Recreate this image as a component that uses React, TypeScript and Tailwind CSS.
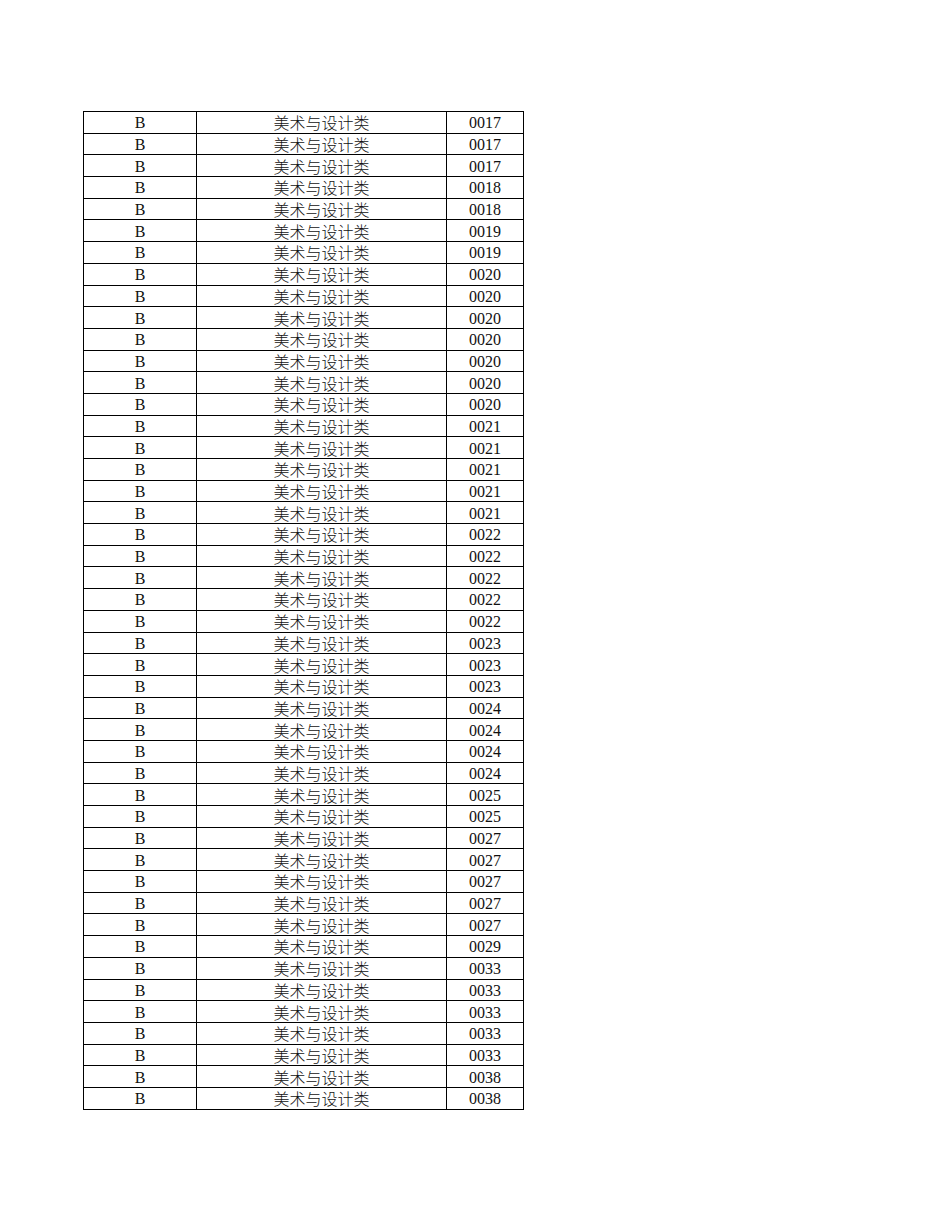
import React from 'react';

const codes: string[] = [
  '0017', '0017', '0017', '0018', '0018', '0019', '0019',
  '0020', '0020', '0020', '0020', '0020', '0020', '0020',
  '0021', '0021', '0021', '0021', '0021',
  '0022', '0022', '0022', '0022', '0022',
  '0023', '0023', '0023',
  '0024', '0024', '0024', '0024',
  '0025', '0025',
  '0027', '0027', '0027', '0027', '0027',
  '0029',
  '0033', '0033', '0033', '0033', '0033',
  '0038', '0038',
];

const latin = { fontFamily: '"Liberation Serif", "Noto Sans CJK SC", serif' };

export default function App() {
  return (
    <div className="min-h-[1230px] w-[950px] bg-white pl-[83px] pt-[111px]">
      <table className="w-[440px] table-fixed border-collapse text-[16px] leading-none text-[#111]">
        <colgroup>
          <col className="w-[113px]" />
          <col className="w-[250px]" />
          <col className="w-[77px]" />
        </colgroup>
        <tbody>
          {codes.map((code, i) => (
            <tr key={i} className="h-[21.7px]">
              <td className="border border-black p-0 pt-[2px] text-center" style={latin}>B</td>
              <td
                className="border border-black p-0 text-center font-light"
                style={{ fontFamily: '"Noto Sans CJK SC", sans-serif' }}
              >
                美术与设计类
              </td>
              <td className="border border-black p-0 pt-[2px] text-center" style={latin}>{code}</td>
            </tr>
          ))}
        </tbody>
      </table>
    </div>
  );
}
